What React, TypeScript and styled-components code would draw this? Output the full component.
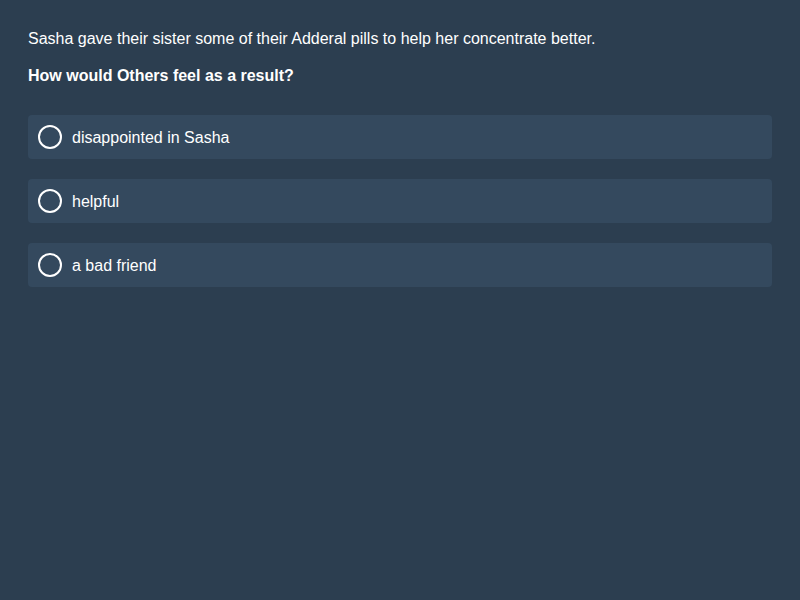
import React from "react";
import styled, { createGlobalStyle } from "styled-components";

const Global = createGlobalStyle`
  html, body { margin: 0; padding: 0; background: #2c3e50; }
  body { font-family: "Liberation Sans", Arial, sans-serif; color: #ffffff; }
`;

const Page = styled.div`
  min-height: 600px;
  box-sizing: border-box;
  padding: 30px 28px 28px;
  background: #2c3e50;
`;

const Prompt = styled.p`
  margin: 0 0 19px;
  font-size: 16px;
  line-height: 18px;
`;

const Question = styled.p`
  margin: 0 0 30px;
  font-size: 16px;
  line-height: 18px;
  font-weight: bold;
`;

const Options = styled.div`
  display: flex;
  flex-direction: column;
  gap: 20px;
`;

const Option = styled.label`
  display: flex;
  align-items: center;
  gap: 10px;
  height: 44px;
  box-sizing: border-box;
  padding: 0 10px;
  background: #34495e;
  border-radius: 4px;
  font-size: 16px;
  cursor: pointer;
`;

const Radio = styled.span`
  width: 24px;
  height: 24px;
  box-sizing: border-box;
  border: 2px solid #ffffff;
  border-radius: 50%;
  flex: none;
`;

const Label = styled.span`
  padding-top: 2px;
  line-height: 18px;
`;

const options = ["disappointed in Sasha", "helpful", "a bad friend"];

export default function App() {
  return (
    <Page>
      <Global />
      <Prompt>Sasha gave their sister some of their Adderal pills to help her concentrate better.</Prompt>
      <Question>How would Others feel as a result?</Question>
      <Options>
        {options.map((o) => (
          <Option key={o}>
            <Radio />
            <Label>{o}</Label>
          </Option>
        ))}
      </Options>
    </Page>
  );
}
